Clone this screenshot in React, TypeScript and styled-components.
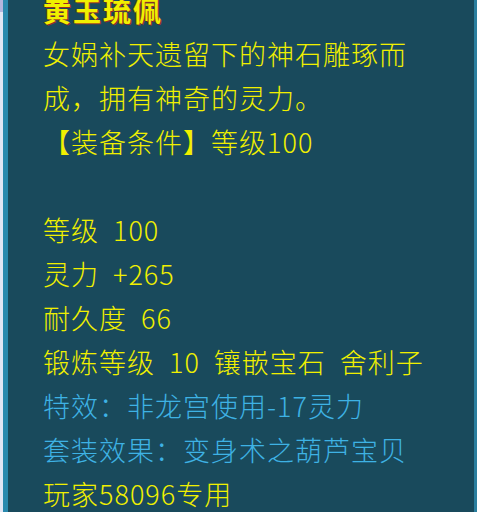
import React from "react";
import styled, { createGlobalStyle } from "styled-components";

const Global = createGlobalStyle`
  html, body { margin: 0; padding: 0; background: #e2e6f4; }
  #root { width: 477px; height: 512px; overflow: hidden; }
`;

const Page = styled.div`
  display: flex;
  width: 477px;
  height: 512px;
  overflow: hidden;
`;

const Gutter = styled.div`
  width: 3px;
  flex: none;
  background: linear-gradient(#b4b6de 0, #b4b6de 12px, #e2e6f4 12px);
`;

const Panel = styled.div`
  flex: 1;
  background: #194a5c;
  border-left: 5px solid #2a89ad;
  border-right: 3px solid #2a7e9e;
  padding-left: 35px;
  overflow: hidden;
  font-family: "Noto Sans CJK SC", "Noto Sans", sans-serif;
  font-size: 27px;
  font-weight: 300;
  letter-spacing: 1px;
  word-spacing: 7px;
`;

const Lines = styled.div`
  margin-top: -12px;
  display: flex;
  flex-direction: column;
`;

const Line = styled.div<{ $tone?: "yellow" | "blue" }>`
  height: 44px;
  line-height: 44px;
  white-space: nowrap;
  color: ${(p) => (p.$tone === "blue" ? "#3eb2e4" : "#f0f000")};
`;

const Title = styled(Line)`
  font-weight: 700;
  font-size: 28px;
  letter-spacing: 2px;
  text-shadow: 1px 1px 0 #9a2a20, -1px 0 0 #6a3a20;
`;

export default function App() {
  return (
    <>
      <Global />
      <Page>
        <Gutter />
        <Panel>
          <Lines>
            <Title>黄玉琉佩</Title>
            <Line>女娲补天遗留下的神石雕琢而</Line>
            <Line>成，拥有神奇的灵力。</Line>
            <Line>【装备条件】等级100</Line>
            <Line />
            <Line>等级 100</Line>
            <Line>灵力 +265</Line>
            <Line>耐久度 66</Line>
            <Line>锻炼等级 10 镶嵌宝石 舍利子</Line>
            <Line $tone="blue">特效：非龙宫使用-17灵力</Line>
            <Line $tone="blue">套装效果：变身术之葫芦宝贝</Line>
            <Line>玩家58096专用</Line>
          </Lines>
        </Panel>
      </Page>
    </>
  );
}
